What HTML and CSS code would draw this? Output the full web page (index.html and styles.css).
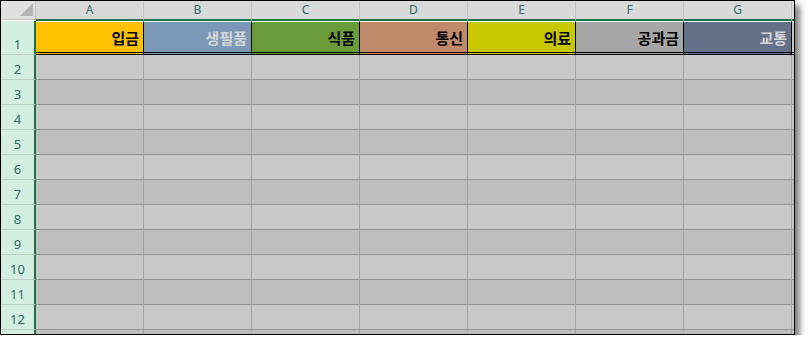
FILE: index.html
```html
<!DOCTYPE html>
<html lang="ko">
<head>
    <meta charset="UTF-8">
    <title>가계부</title>
    <link rel="stylesheet" href="styles.css">
</head>
<body>
    <div class="sheet">
        <!-- column headers -->
        <div class="corner"><span class="corner-mark"></span></div>
        <div class="ch">A</div>
        <div class="ch">B</div>
        <div class="ch">C</div>
        <div class="ch">D</div>
        <div class="ch">E</div>
        <div class="ch">F</div>
        <div class="ch">G</div>
        <div class="ch tail"></div>

        <!-- row 1: categories -->
        <div class="rh">1</div>
        <div class="cat cat-income">입금</div>
        <div class="cat cat-goods">생필품</div>
        <div class="cat cat-food">식품</div>
        <div class="cat cat-phone">통신</div>
        <div class="cat cat-medical">의료</div>
        <div class="cat cat-bills">공과금</div>
        <div class="cat cat-transit">교통</div>
        <div class="cat tail"></div>

        <div class="rh">2</div>
        <div class="c"></div><div class="c"></div><div class="c"></div><div class="c"></div><div class="c"></div><div class="c"></div><div class="c"></div><div class="c tail"></div>
        <div class="rh">3</div>
        <div class="c odd"></div><div class="c odd"></div><div class="c odd"></div><div class="c odd"></div><div class="c odd"></div><div class="c odd"></div><div class="c odd"></div><div class="c odd tail"></div>
        <div class="rh">4</div>
        <div class="c"></div><div class="c"></div><div class="c"></div><div class="c"></div><div class="c"></div><div class="c"></div><div class="c"></div><div class="c tail"></div>
        <div class="rh">5</div>
        <div class="c odd"></div><div class="c odd"></div><div class="c odd"></div><div class="c odd"></div><div class="c odd"></div><div class="c odd"></div><div class="c odd"></div><div class="c odd tail"></div>
        <div class="rh">6</div>
        <div class="c"></div><div class="c"></div><div class="c"></div><div class="c"></div><div class="c"></div><div class="c"></div><div class="c"></div><div class="c tail"></div>
        <div class="rh">7</div>
        <div class="c odd"></div><div class="c odd"></div><div class="c odd"></div><div class="c odd"></div><div class="c odd"></div><div class="c odd"></div><div class="c odd"></div><div class="c odd tail"></div>
        <div class="rh">8</div>
        <div class="c"></div><div class="c"></div><div class="c"></div><div class="c"></div><div class="c"></div><div class="c"></div><div class="c"></div><div class="c tail"></div>
        <div class="rh">9</div>
        <div class="c odd"></div><div class="c odd"></div><div class="c odd"></div><div class="c odd"></div><div class="c odd"></div><div class="c odd"></div><div class="c odd"></div><div class="c odd tail"></div>
        <div class="rh">10</div>
        <div class="c"></div><div class="c"></div><div class="c"></div><div class="c"></div><div class="c"></div><div class="c"></div><div class="c"></div><div class="c tail"></div>
        <div class="rh">11</div>
        <div class="c odd"></div><div class="c odd"></div><div class="c odd"></div><div class="c odd"></div><div class="c odd"></div><div class="c odd"></div><div class="c odd"></div><div class="c odd tail"></div>
        <div class="rh">12</div>
        <div class="c"></div><div class="c"></div><div class="c"></div><div class="c"></div><div class="c"></div><div class="c"></div><div class="c"></div><div class="c tail"></div>
        <!-- next row, cut off by the frame -->
        <div class="rh"></div>
        <div class="c odd"></div><div class="c odd"></div><div class="c odd"></div><div class="c odd"></div><div class="c odd"></div><div class="c odd"></div><div class="c odd"></div><div class="c odd tail"></div>
    </div>
</body>
</html>
```

FILE: styles.css
```css
/* Reset */
* {
    margin: 0;
    padding: 0;
    box-sizing: border-box;
}

:root {
    --head-bg: #d9d9d9;
    --head-line: #c3c3c3;
    --row-head-bg: #d4efe1;
    --row-head-line: #bccfc4;
    --select-green: #217346;
    --head-text: #2f6a66;
    --cell-light: #c9c9c9;
    --cell-dark: #bebebe;
    --grid-v: #a3a3a3;
    --grid-h: #929292;
}

html, body {
    background-color: #fff;
    font-family: 'Noto Sans', 'Noto Sans CJK KR', sans-serif;
}

/* Worksheet frame */
.sheet {
    width: 795px;
    height: 335px;
    border: 1px solid #000;
    overflow: hidden;
    display: grid;
    grid-template-columns: 35px repeat(7, 108px) 2px;
    grid-template-rows: 20px 34px repeat(11, 25px) 25px;
    box-shadow: 5px 5px 6px rgba(0, 0, 0, 0.5);
}

/* Header strip */
.corner {
    background-color: #e0e0e0;
    border-right: 1px solid var(--head-line);
    border-bottom: 1px solid var(--head-line);
    margin-bottom: 1px;
    display: flex;
    justify-content: flex-end;
    align-items: flex-end;
    padding: 0 2px 3px 0;
}

.corner-mark {
    width: 0;
    height: 0;
    border-left: 13px solid transparent;
    border-bottom: 13px solid #b4b4b4;
}

.ch {
    background-color: var(--head-bg);
    border-right: 1px solid var(--head-line);
    border-bottom: 2px solid var(--select-green);
    color: var(--head-text);
    font-size: 12px;
    line-height: 18px;
    text-align: center;
}

/* Row numbers */
.rh {
    background-color: var(--row-head-bg);
    border-right: 2px solid var(--select-green);
    border-bottom: 1px solid var(--row-head-line);
    color: var(--head-text);
    font-size: 13px;
    line-height: 1;
    display: flex;
    justify-content: center;
    align-items: flex-end;
    padding-bottom: 3px;
}

/* Category row */
.cat {
    border-top: 1px solid #fff;
    border-right: 1px solid #000;
    border-bottom: 3px double #000;
    font-family: 'Noto Sans CJK KR', sans-serif;
    font-weight: bold;
    font-size: 15px;
    line-height: 1;
    color: #000;
    display: flex;
    justify-content: flex-end;
    align-items: center;
    padding-right: 4px;
}

.cat-income { background-color: #ffc000; }
.cat-goods { background-color: #7a97b5; color: #d6d6d6; }
.cat-food { background-color: #6b9c3a; }
.cat-phone { background-color: #c08a6a; }
.cat-medical { background-color: #c8c800; }
.cat-bills { background-color: #a6a6a6; }
.cat-transit { background-color: #647189; color: #d6d6d6; }
.cat.tail { background-color: #c9c9c9; border-right: none; }

/* Data cells */
.c {
    background-color: var(--cell-light);
    border-right: 1px solid var(--grid-v);
    border-bottom: 1px solid var(--grid-h);
}

.c.odd {
    background-color: var(--cell-dark);
}

.tail {
    border-right: none;
}
```
